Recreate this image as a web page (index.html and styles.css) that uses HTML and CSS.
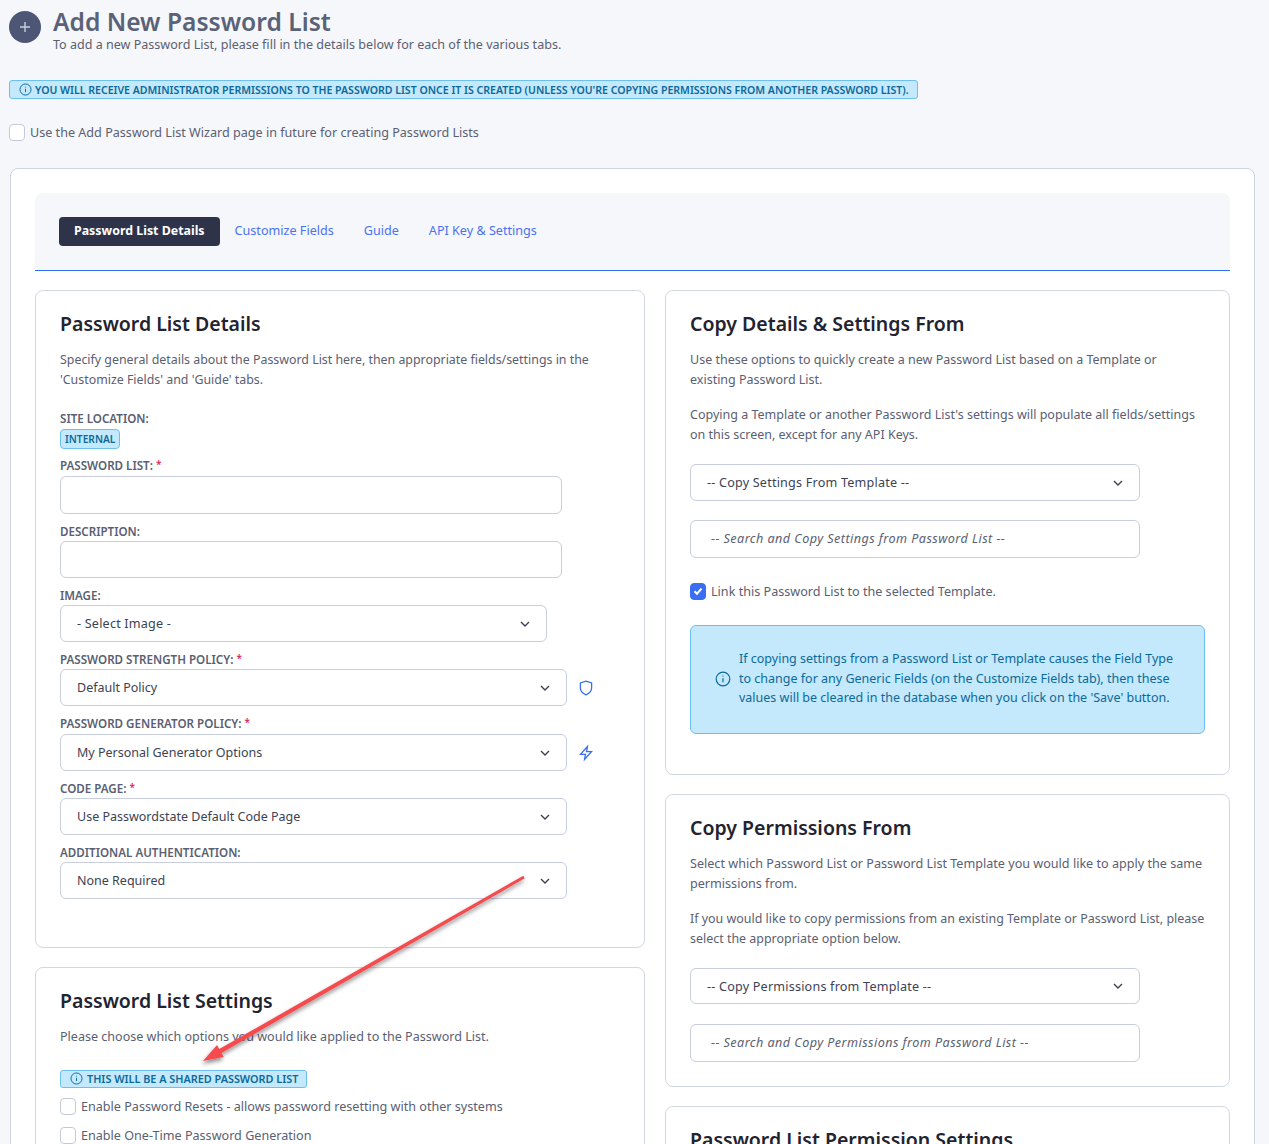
FILE: index.html
```html
<!DOCTYPE html>
<html lang="en">
<head>
  <meta charset="UTF-8">
  <meta name="viewport" content="width=device-width, initial-scale=1.0">
  <title>Add New Password List</title>
  <link rel="stylesheet" href="styles.css">
</head>
<body>
  <header class="page-head">
    <span class="head-icon">
      <svg viewBox="0 0 16 16" width="16" height="16"><path d="M8 3v10M3 8h10" stroke="#c9cede" stroke-width="1.4" fill="none"/></svg>
    </span>
    <div>
      <h1>Add New Password List</h1>
      <p>To add a new Password List, please fill in the details below for each of the various tabs.</p>
    </div>
  </header>

  <div class="notice-row">
    <span class="pill pill-wide">
      <svg class="info" viewBox="0 0 16 16" width="13" height="13"><circle cx="8" cy="8" r="6.8"/><path d="M8 7.2v4M8 4.6v1"/></svg>
      YOU WILL RECEIVE ADMINISTRATOR PERMISSIONS TO THE PASSWORD LIST ONCE IT IS CREATED (UNLESS YOU'RE COPYING PERMISSIONS FROM ANOTHER PASSWORD LIST).
    </span>
  </div>

  <label class="check wizard-check"><span class="box"></span>Use the Add Password List Wizard page in future for creating Password Lists</label>

  <main class="outer">
    <nav class="tabs">
      <a href="#" class="tab active">Password List Details</a>
      <a href="#" class="tab">Customize Fields</a>
      <a href="#" class="tab">Guide</a>
      <a href="#" class="tab">API Key &amp; Settings</a>
    </nav>

    <div class="columns">
      <div class="col">
        <section class="card details-card">
          <h2>Password List Details</h2>
          <p class="intro">Specify general details about the Password List here, then appropriate fields/settings in the 'Customize Fields' and 'Guide' tabs.</p>

          <div class="label site-label">SITE LOCATION:</div>
          <span class="pill pill-tag">INTERNAL</span>

          <div class="label l-pwlist">PASSWORD LIST: <span class="req">*</span></div>
          <div class="input w-input h-38"></div>

          <div class="label l-next">DESCRIPTION:</div>
          <div class="input w-input"></div>

          <div class="label l-next">IMAGE:</div>
          <div class="select w-image">- Select Image -<svg class="chev" viewBox="0 0 10 6" width="10" height="6"><path d="M1 1l4 4 4-4"/></svg></div>

          <div class="label l-next">PASSWORD STRENGTH POLICY: <span class="req">*</span></div>
          <div class="select-row">
            <div class="select w-select">Default Policy<svg class="chev" viewBox="0 0 10 6" width="10" height="6"><path d="M1 1l4 4 4-4"/></svg></div>
            <svg class="side-icon" viewBox="0 0 16 16" width="16" height="16"><path d="M8 1.2 13.6 3v5c0 3-2.3 5.4-5.600 6.800C4.700 13.400 2.400 11 2.400 8V3z"/></svg>
          </div>

          <div class="label l-next gen-label">PASSWORD GENERATOR POLICY: <span class="req">*</span></div>
          <div class="select-row">
            <div class="select w-select">My Personal Generator Options<svg class="chev" viewBox="0 0 10 6" width="10" height="6"><path d="M1 1l4 4 4-4"/></svg></div>
            <svg class="side-icon" viewBox="0 0 16 16" width="16" height="16"><path d="M9.500 1.500 2.500 9.300h5l-1 5.200 7-7.800h-5z"/></svg>
          </div>

          <div class="label l-next">CODE PAGE: <span class="req">*</span></div>
          <div class="select w-select">Use Passwordstate Default Code Page<svg class="chev" viewBox="0 0 10 6" width="10" height="6"><path d="M1 1l4 4 4-4"/></svg></div>

          <div class="label l-next">ADDITIONAL AUTHENTICATION:</div>
          <div class="select w-select">None Required<svg class="chev" viewBox="0 0 10 6" width="10" height="6"><path d="M1 1l4 4 4-4"/></svg></div>
        </section>

        <section class="card settings-card">
          <h2>Password List Settings</h2>
          <p class="intro settings-intro">Please choose which options you would like applied to the Password List.</p>
          <span class="pill pill-shared">
            <svg class="info" viewBox="0 0 16 16" width="13" height="13"><circle cx="8" cy="8" r="6.8"/><path d="M8 7.2v4M8 4.6v1"/></svg>
            THIS WILL BE A SHARED PASSWORD LIST
          </span>
          <label class="check"><span class="box"></span>Enable Password Resets - allows password resetting with other systems</label>
          <label class="check"><span class="box"></span>Enable One-Time Password Generation</label>
        </section>
      </div>

      <div class="col">
        <section class="card copy-card">
          <h2>Copy Details &amp; Settings From</h2>
          <p class="intro">Use these options to quickly create a new Password List based on a Template or existing Password List.</p>
          <p class="intro">Copying a Template or another Password List's settings will populate all fields/settings on this screen, except for any API Keys.</p>
          <div class="select w-copy">-- Copy Settings From Template --<svg class="chev" viewBox="0 0 10 6" width="10" height="6"><path d="M1 1l4 4 4-4"/></svg></div>
          <div class="input w-copy search-box">-- Search and Copy Settings from Password List --</div>
          <label class="check link-check">
            <span class="box checked"><svg viewBox="0 0 12 12" width="12" height="12"><path d="M2.500 6.300 5 8.700l4.500-5"/></svg></span>Link this Password List to the selected Template.
          </label>
          <div class="alert">
            <svg class="info" viewBox="0 0 16 16" width="16" height="16"><circle cx="8" cy="8" r="6.8"/><path d="M8 7.2v4M8 4.6v1"/></svg>
            <p>If copying settings from a Password List or Template causes the Field Type to change for any Generic Fields (on the Customize Fields tab), then these values will be cleared in the database when you click on the 'Save' button.</p>
          </div>
        </section>

        <section class="card perm-card">
          <h2>Copy Permissions From</h2>
          <p class="intro">Select which Password List or Password List Template you would like to apply the same permissions from.</p>
          <p class="intro perm-second">If you would like to copy permissions from an existing Template or Password List, please select the appropriate option below.</p>
          <div class="select w-copy h-36">-- Copy Permissions from Template --<svg class="chev" viewBox="0 0 10 6" width="10" height="6"><path d="M1 1l4 4 4-4"/></svg></div>
          <div class="input w-copy search-box">-- Search and Copy Permissions from Password List --</div>
        </section>

        <section class="card">
          <h2>Password List Permission Settings</h2>
        </section>
      </div>
    </div>

    <!-- red annotation arrow pasted over the form -->
    <svg class="arrow" viewBox="0 0 340 200" width="340" height="200">
      <defs>
        <filter id="arrowShadow" x="-10%" y="-10%" width="120%" height="130%">
          <feDropShadow dx="-1" dy="3" stdDeviation="2" flood-color="#000" flood-opacity="0.45"/>
        </filter>
      </defs>
      <polygon filter="url(#arrowShadow)" fill="#f44b4f" points="322.3,4.7 323.7,7.3 20.5,182 22.8,186 2,190 16,174 18.3,178"/>
    </svg>
  </main>
</body>
</html>
```

FILE: styles.css
```css
html, body { height: 1144px; overflow: hidden; }
body { margin: 0; background: #f6f7fb; font-family: "Noto Sans", Arial, sans-serif; font-size: 12.6px; color: #5a6072; }

.page-head { display: flex; gap: 12px; padding: 8px 9px 0; height: 70px; box-sizing: border-box; }
.head-icon { width: 32px; height: 32px; margin-top: 3px; border-radius: 50%; background: #4d5775; display: flex; align-items: center; justify-content: center; flex: none; }
.page-head h1 { margin: 0; font-size: 24.6px; line-height: 28px; font-weight: 600; color: #5a6278; }
.page-head p { margin: 1px 0 0; line-height: 16px; font-size: 12.55px; color: #5a6072; }

.notice-row { padding: 0 9px; margin-top: 10px; height: 19px; }
.pill { display: inline-flex; align-items: center; box-sizing: border-box; background: #c4e8fc; border: 1px solid #6cc0f0; border-radius: 3px; color: #0b6a9a; font-weight: 600; font-size: 10.55px; }
.pill-wide { height: 19px; padding: 0 8px 0 9px; gap: 3px; white-space: nowrap; }
.pill-tag { height: 20px; padding: 0 4px; border-radius: 4px; font-size: 10.2px; }
.pill-shared { height: 18px; padding: 0 8px 0 9px; gap: 4px; margin-bottom: 11px; font-size: 10.85px; }
.info { fill: none; stroke: #0b6a9a; stroke-width: 1.2; flex: none; }

.check { display: flex; align-items: center; height: 16px; gap: 5px; margin-bottom: 13px; }
.wizard-check { margin: 25px 0 0 9px; }
.box { width: 16px; height: 17px; box-sizing: border-box; background: #fff; border: 1px solid #c5cad8; border-radius: 4px; flex: none; display: flex; align-items: center; justify-content: center; }
.box.checked { background: #3a6ff2; border-color: #3a6ff2; }
.box.checked path { fill: none; stroke: #fff; stroke-width: 2; }

.outer { position: relative; margin: 28px 14px 0 10px; padding: 24px; background: #fff; border: 1px solid #cfd3e0; border-radius: 8px; height: 1200px; box-sizing: border-box; }

.tabs { display: flex; align-items: center; gap: 30px; height: 78px; box-sizing: border-box; padding: 0 24px; background: #f6f7fb; border-bottom: 1px solid #2f6df6; border-radius: 8px 8px 0 0; }
.tab { color: #4a72f5; text-decoration: none; font-size: 12.6px; padding-bottom: 3px; }
.tab.active { background: #2e3349; color: #fff; font-size: 12.4px; font-weight: 700; padding: 0 15px; height: 29px; line-height: 27px; border-radius: 4px; margin-right: -15px; }

.columns { display: flex; gap: 20px; margin-top: 19px; }
.col { width: 610px; display: flex; flex-direction: column; gap: 19px; }
.col + .col { width: 565px; }

.card { background: #fff; border: 1px solid #d3d7e2; border-radius: 8px; padding: 23px 24px 0; box-sizing: border-box; }
.card h2 { margin: 0 0 16px; font-size: 19.5px; line-height: 20px; font-weight: 600; color: #1f2430; }
.intro { margin: 0 0 16px; line-height: 19.5px; }
.details-card .intro { font-size: 12.38px; }
.copy-card .intro { font-size: 12.5px; }
.settings-intro { margin-bottom: 23px; font-size: 12.55px; }
.perm-second { font-size: 12.45px; }

.details-card { height: 658px; }
.settings-card { height: 300px; }
.copy-card { height: 485px; }
.perm-card { height: 293px; padding-right: 15px; }

.label { font-size: 11.6px; font-weight: 600; line-height: 14px; color: #5a6072; margin-bottom: 2px; }
.site-label { margin-top: 23px; margin-bottom: 3px; }
.l-pwlist { margin-top: 10px; margin-bottom: 3px; }
.l-next { margin-top: 11px; }
.gen-label { margin-bottom: 3px; }
.req { color: #e0245e; font-size: 10px; line-height: 0; vertical-align: 2px; }

.input, .select { position: relative; box-sizing: border-box; height: 37px; background: #fff; border: 1px solid #c8cde0; border-radius: 6px; display: flex; align-items: center; color: #3c4254; }
.select { padding: 0 16px; }
.h-38 { height: 38px; }
.h-36 { height: 36px; }
.w-input { width: 502px; }
.w-image { width: 487px; letter-spacing: 0.2px; }
.w-select { width: 507px; font-size: 12.5px; }
.w-copy { width: 450px; letter-spacing: 0.2px; }
.chev { position: absolute; right: 16px; top: 50%; margin-top: -3px; fill: none; stroke: #3c4254; stroke-width: 1.4; }

.select-row { display: flex; align-items: center; gap: 11px; }
.side-icon { fill: none; stroke: #3a6ff2; stroke-width: 1.3; }

.copy-card .select { margin-top: 20px; }
.perm-card .select { margin-top: 20px; }
.copy-card .search-box { margin-top: 19px; }
.search-box { margin-top: 20px; height: 38px; padding-left: 20px; padding-bottom: 2px; font-style: italic; color: #5a6072; letter-spacing: 0.45px; }
.link-check { margin: 25px 0 0; }

.alert { display: flex; align-items: center; gap: 7px; box-sizing: border-box; height: 109px; margin-top: 26px; padding: 0 25px 2px 24px; background: #c4e8fc; border: 1px solid #6cc0f0; border-radius: 6px; color: #0b6a9a; font-size: 12.5px; }
.alert p { margin: 0 0 0 1px; line-height: 19.5px; }

.arrow { position: absolute; left: 190px; top: 702px; pointer-events: none; }
```
